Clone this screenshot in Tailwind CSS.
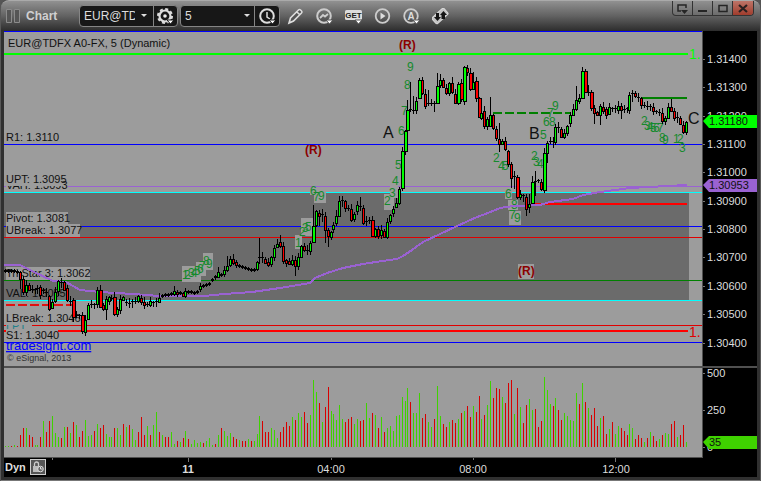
<!DOCTYPE html>
<html lang="en">
<head>
<meta charset="utf-8">
<title>Chart</title>
<script src="https://cdn.jsdelivr.net/npm/@tailwindcss/browser@4"></script>
</head>
<body class="bg-[#555] font-['Liberation_Sans',sans-serif]">
<div class="flex h-screen flex-col rounded-t-lg border-x border-[#585858] bg-[#303030]">

  <header class="flex h-[31px] shrink-0 items-center rounded-t-lg border-t border-[#aaa] bg-linear-to-b from-[#919191] via-[#626262] to-[#2d2d2d] pl-[5px]">
    <svg class="h-4 w-[15px] shrink-0" viewBox="0 0 15 16" fill="#555" stroke="#8b8b8b" aria-hidden="true"><path d="M.5 1.500h5v13h-5zM8.500 1.500h5v13h-5z"/></svg>
    <h1 class="ml-[5px] w-[53px] text-xs font-bold text-[#d0d0d0]">Chart</h1>

    <div class="flex h-[22px] shrink-0 rounded-sm border border-[#858585] bg-[#171717]">
      <input aria-label="Symbol" value="EUR@TDFX" class="ml-1 w-[51px] bg-transparent text-xs text-[#ddd] outline-none">
      <button aria-label="Symbol list" class="flex w-[18px] items-center justify-center"><svg width="6" height="4" viewBox="0 0 6 4"><path d="M0 0h6L3 3z" fill="#ddd"/></svg></button>
      <button aria-label="Settings" class="flex w-6 items-center justify-center border-l border-[#858585]">
        <svg width="17" height="17" viewBox="0 0 17 17"><circle cx="8" cy="8" r="5.500" fill="none" stroke="#ddd" stroke-width="2.200"/><circle cx="8" cy="8" r="7" fill="none" stroke="#ddd" stroke-width="2" stroke-dasharray="3 2.500"/><circle cx="8" cy="8" r="1.800" fill="#eee"/><path d="M10 12h7l-3.500 4z" fill="#fff" stroke="#171717"/></svg>
      </button>
    </div>

    <div class="ml-[2px] flex h-[22px] shrink-0 rounded-sm border border-[#858585] bg-[#171717]">
      <select aria-label="Interval" class="w-[58px] appearance-none bg-transparent pl-1 text-xs text-[#ddd] outline-none"><option>5</option></select>
      <span class="flex w-[15px] items-center justify-center"><svg width="6" height="4" viewBox="0 0 6 4"><path d="M0 0h6L3 3z" fill="#ddd"/></svg></span>
      <button aria-label="Time template" class="flex w-[25px] items-center justify-center border-l border-[#858585]">
        <svg width="17" height="17" viewBox="0 0 17 17"><circle cx="8" cy="8" r="6.800" fill="none" stroke="#ddd" stroke-width="2"/><path d="M8 4v5l3 2" fill="none" stroke="#ddd" stroke-width="1.500"/><path d="M10 12h7l-3.500 4z" fill="#fff" stroke="#171717"/></svg>
      </button>
    </div>

    <nav aria-label="Tools" class="ml-[7px] flex items-center gap-3">
      <button aria-label="Draw"><svg width="17" height="17" viewBox="0 0 17 17"><path d="M2 15l1.500-5L11.500 2q1-1 2 0l1 1q1 1 0 2L6.500 13zM10 4l3 3" fill="#555" stroke="#ddd" stroke-width="1.600"/></svg></button>
      <button aria-label="Studies"><svg width="17" height="17" viewBox="0 0 17 17"><circle cx="8" cy="8" r="6.800" fill="none" stroke="#ccc" stroke-width="2"/><path d="M4 10l3-3 2 1.500L12 6" fill="none" stroke="#ccc" stroke-width="1.800"/><path d="M10 12h7l-3.500 4z" fill="#fff" stroke="#555"/></svg></button>
      <button aria-label="GET"><svg width="17" height="17" viewBox="0 0 17 17"><rect x="0" y="2" width="17" height="10" rx="1.500" fill="#ddd"/><text x="8.500" y="10" text-anchor="middle" font-size="8" font-weight="bold" fill="#222">GET</text><path d="M10 12h7l-3.500 4z" fill="#fff" stroke="#555"/></svg></button>
      <button aria-label="Replay"><svg width="17" height="17" viewBox="0 0 17 17"><circle cx="8.500" cy="8" r="6.800" fill="none" stroke="#ccc" stroke-width="1.800"/><path d="M6.500 4.500v7l5-3.500z" fill="#ddd"/></svg></button>
      <button aria-label="Alerts"><svg width="17" height="17" viewBox="0 0 17 17"><circle cx="8" cy="8" r="6.800" fill="none" stroke="#ccc" stroke-width="1.800"/><text x="8" y="12" text-anchor="middle" font-size="10" font-weight="bold" fill="#ddd">A</text><path d="M10 12h7l-3.500 4z" fill="#fff" stroke="#555"/></svg></button>
      <button aria-label="Link"><svg width="17" height="17" viewBox="0 0 17 17"><rect x="0" y="4" width="16" height="8" rx="1.500" transform="rotate(-42 8 8)" fill="#c4c4c4" stroke="#ddd"/><path d="M5 5l2 0v4h2l-3.500 4L2 9h2V5zM9.500 11V7H8l3.500-4L15 7h-2v4z" fill="#151515"/></svg></button>
    </nav>

    <div class="mr-[6px] ml-auto flex h-[15px] self-start overflow-hidden rounded-b-sm border border-t-0 border-[#333] bg-linear-to-b from-[#909090] to-[#6c6c6c]">
      <button aria-label="Window menu" class="flex w-5 items-center justify-center border-r border-[#333]"><svg width="11" height="11" viewBox="0 0 11 11"><path d="M4 8H1V2h8v3" fill="none" stroke="#252525" stroke-width="1.500"/><path d="M4 7h7L7.500 11z" fill="#252525"/></svg></button>
      <button aria-label="Minimize" class="flex w-5 items-center justify-center border-r border-[#333]"><svg width="10" height="10" viewBox="0 0 10 10"><path d="M0 7h9v2H0z" fill="#252525"/></svg></button>
      <button aria-label="Maximize" class="flex w-5 items-center justify-center border-r border-[#333]"><svg width="10" height="10" viewBox="0 0 10 10"><path d="M1 2.500h8v6H1z" fill="none" stroke="#252525" stroke-width="1.500"/></svg></button>
      <button aria-label="Close" class="flex w-5 items-center justify-center bg-linear-to-b from-[#bd7468] to-[#a03c2c]"><svg width="10" height="10" viewBox="0 0 10 10"><path d="M1 2l8 7M9 2L1 9" stroke="#2a2020" stroke-width="2.200"/></svg></button>
    </div>
  </header>

  <main class="mx-[3px] flex min-h-0 flex-1 flex-col bg-black">
    <section class="flex min-h-0 flex-1">
      <div class="min-w-0 flex-1 border-r border-[#505050] bg-[#9c9c9c]">
        <svg class="block h-full w-full" viewBox="4 31 698 335" preserveAspectRatio="xMinYMin meet" font-size="11" role="img" aria-label="EUR@TDFX price chart">
          <g shape-rendering="crispEdges">
            <path d="M4 193h685v107H4z" fill="#6b6b6b"/>
            <path d="M4 31h698v1H4zM4 144h698v1H4zM4 226h698v1H4zM4 342h698v1H4z" fill="#00f"/>
            <path d="M4 53h684v2H4z" fill="#0f0"/>
            <path d="M4 186h698v1H4z" fill="#9a62d2"/>
            <path d="M4 192h698v1H4zM4 300h698v1H4z" fill="#0ff"/>
            <path d="M4 237h698v1H4zM4 325h698v1H4z" fill="#e00000"/>
            <path d="M4 330h684v2H4zM532 203h155v2H532z" fill="#f00"/>
            <path d="M4 280h698v1H4zM641 97h46v2h-46z" fill="#008000"/>
            <path d="M493 113h78" stroke="#008000" stroke-width="2" stroke-dasharray="9 3"/>
            <path d="M6 305h68" stroke="#e01010" stroke-width="2" stroke-dasharray="9 3"/>
          </g>
          <g id="labels"></g>
          <clipPath id="linkclip"><rect x="4" y="342" width="100" height="12"/></clipPath>
          <g clip-path="url(#linkclip)"><a href="#"><text x="6" y="350" font-size="13" fill="#00f" text-decoration="underline">tradesight.com</text></a></g>
          <text x="7" y="361" font-size="9" fill="#333">© eSignal, 2013</text>
          <g id="counts" fill="#158a2d"></g>
          <polyline points="4,265 20,265 34,272 53,281 66,282 80,290 100,292 133,294 160,296 204,296 224,294 252,292 280,288 310,283 315,278 327,273 343,268 363,264 382,261 397,259 403,256 412,250 423,242 440,234 457,226 477,217 488,213 500,208 513,206 540,205 550,202 573,199 583,195 600,192 630,188 667,186 687,185" fill="none" stroke="#9a62d2" stroke-width="2" shape-rendering="crispEdges"/>
          <g id="candles" shape-rendering="crispEdges"></g>
          <g fill="#8b0000" font-size="12" font-weight="bold"><text x="399" y="49">(R)</text><text x="305" y="154">(R)</text><rect x="518" y="264" width="16" height="15" fill="#9c9c9c"/><text x="518" y="275">(R)</text></g>
          <g font-size="16" fill="#111"><text x="383" y="138">A</text><text x="529" y="139">B</text><text x="688" y="124">C</text></g>
          <text x="689" y="59" font-size="14" fill="#0f0">1.</text>
          <text x="689" y="337" font-size="14" fill="#e00000">1.</text>
        </svg>
      </div>
      <div class="w-[54px] shrink-0">
        <svg id="prices" class="block h-full w-full" viewBox="703 31 54 335" preserveAspectRatio="xMinYMin meet" font-size="11" fill="#ddd"></svg>
      </div>
    </section>

    <section class="flex h-[92px] shrink-0 border-t-2 border-[#505050]">
      <div class="min-w-0 flex-1 border-r border-b border-[#505050] bg-[#9c9c9c]">
        <svg id="volume" class="block h-full w-full" viewBox="4 368 698 89" preserveAspectRatio="xMinYMin meet" shape-rendering="crispEdges" role="img" aria-label="Volume"></svg>
      </div>
      <div class="w-[54px] shrink-0">
        <svg class="block h-full w-full" viewBox="703 368 54 90" preserveAspectRatio="xMinYMin meet" font-size="11" fill="#ddd">
          <path d="M703 373h2v1h-2zM703 410h2v1h-2zM703 447h2v1h-2z" fill="#777"/>
          <text x="707" y="377">500</text><text x="707" y="414">250</text><text x="707" y="451">0</text>
          <path d="M703 442l6-6h48v13h-48z" fill="#3fd200"/><text x="709" y="446" fill="#111">35</text>
        </svg>
      </div>
    </section>

    <footer class="flex h-[19px] shrink-0 text-[#ddd]">
      <div class="flex w-[42px] shrink-0 gap-1 pt-px">
        <span class="pl-px text-[11px] leading-4 font-bold">Dyn</span>
        <button aria-label="Lock time scale" class="flex size-4 shrink-0 items-center justify-center border border-[#ccc] bg-[#555]"><svg width="12" height="12" viewBox="0 0 12 12"><path d="M2.500 6V3a2 2 0 0 1 4 0v3" fill="none" stroke="#ccc" stroke-width="1.300"/><path d="M1 5h7v6H1z" fill="#bbb"/><circle cx="8.500" cy="8" r="2.800" fill="#666" stroke="#ddd"/><path d="M8.500 6v2h2" fill="none" stroke="#ddd"/></svg></button>
      </div>
      <svg class="block h-full min-w-0 flex-1" viewBox="46 458 711 19" preserveAspectRatio="xMinYMin meet" font-size="11" fill="#ddd" text-anchor="middle">
        <path d="M52 458h1v2h-1zM188 458h1v4h-1zM331 458h1v2h-1zM473 458h1v2h-1zM615 458h1v4h-1z" fill="#777"/>
        <text x="188" y="473" font-weight="bold">11</text><text x="331" y="473">04:00</text><text x="473" y="473">08:00</text><text x="616" y="473">12:00</text>
      </svg>
    </footer>
  </main>
  <div class="h-1 shrink-0 border-b border-[#777]"></div>
</div>

<script>
const NS = 'http://www.w3.org/2000/svg';
function add(parent, tag, attrs, text) {
  const el = document.createElementNS(NS, tag);
  for (const k in attrs) el.setAttribute(k, attrs[k]);
  if (text) el.textContent = text;
  parent.appendChild(el);
}
const rect = (p, x, y, width, height, fill) => add(p, 'rect', { x, y, width, height, fill });
const barX = i => 5 + i * 3 - Math.floor((i + 14) / 25);

// Level labels: x, baseline, box width, text
const labels = document.getElementById('labels');
[[6,189,62,'VAH: 1.3093'],[6,183,56,'UPT: 1.3095'],[6,234,74,'UBreak: 1.3077'],[6,222,62,'Pivot: 1.3081'],
 [6,277,84,'Tri Star 3: 1.3062'],[6,297,0,'VAL: 1.3055'],[6,330,26,'LPT'],[6,322,74,'LBreak: 1.3046'],[6,339,52,'S1: 1.3040'],[6,141,0,'R1: 1.3110'],[8,47,0,'EUR@TDFX A0-FX, 5 (Dynamic)']
].forEach(([x, y, w, t]) => {
  if (w) rect(labels, x, y - 10, w, 13, '#9c9c9c');
  add(labels, 'text', { x, y, fill: t === 'LPT' ? '#20808a' : '#111' }, t);
});

// Setup counts: x, baseline, digits; boxes back the ones over the shaded zone
const counts = document.getElementById('counts');
[[182,266,19,16],[196,262,10,14],[203,253,10,17],[295,235,7,14],[301,218,12,18],[310,189,4,6],[314,190,12,13],[384,194,10,16],[390,186,8,12],[505,188,7,11],[508,200,10,10],[509,211,12,14]]
  .forEach(b => rect(counts, ...b, '#9c9c9c'));
[[182,279,'1'],[184,279,'2'],[188,277,'3'],[191,277,'4'],[194,275,'5'],[197,273,'6'],[199,270,'7'],[203,265,'8'],[206,268,'9'],
 [295,247,'1'],[299,236,'2'],[302,232,'3'],[305,231,'5'],[310,195,'6'],[313,201,'7'],[318,200,'9'],
 [384,205,'2'],[389,197,'3'],[392,185,'4'],[395,169,'5'],[398,135,'6'],[401,115,'7'],[404,89,'8'],[407,71,'9'],
 [493,162,'2'],[498,170,'4'],[502,170,'5'],[505,198,'6'],[511,209,'8'],[509,219,'7'],[514,222,'9'],
 [531,160,'2'],[533,166,'3'],[537,168,'4'],[540,139,'5'],[543,126,'6'],[549,126,'8'],[547,117,'7'],[552,110,'9'],
 [641,125,'2'],[644,130,'3'],[647,131,'4'],[650,132,'5'],[653,132,'6'],[657,132,'7'],[659,142,'8'],[662,144,'9'],[673,143,'1'],[677,143,'2'],[679,152,'3']
].forEach(([x, y, t]) => add(counts, 'text', { x, y, 'font-size': 12 }, t));

// Price bars: x top bottom colour [high low]; k marks a flat bar
const prices = `5 270 272 k,8 270 272 k,11 270 272 k,14 270 272 k,17 271 273 k,20 272 279 r 271 289,23 279 292 r,26 285 292 g,29 285 290 r,32 289 291 k,35 289 291 k,38 288 290 k,41 287 295 r 285 299,44 290 292 k,47 292 294 k,50 296 309 r 295 311,52 302 308 g,55 292 301 g,58 281 291 g 280 296,61 282 284 k,64 282 290 r,66 288 300 r,69 301 303 k,72 300 317 r 298 322,75 315 317 k,78 315 317 k,81 315 331 r,84 320 332 g,87 305 319 g,90 304 306 k,93 304 306 k,96 290 304 g,99 290 307 r,102 305 309 r,105 299 309 g 296 320,108 297 301 g,111 298 300 k,114 297 314 r,117 309 314 g,120 299 310 g,123 297 300 g,126 302 304 k,129 303 305 k,132 301 304 k,135 301 303 k,137 296 301 g,140 298 302 r,143 302 305 r,146 304 306 k,149 301 305 g,152 302 304 k,155 301 303 k,158 298 302 g,161 295 297 k,164 294 296 k,167 294 296 k,170 293 295 k,173 291 294 g,176 292 294 r,179 292 294 k,182 293 296 r,186 291 296 g,188 291 293 k,191 291 293 k,194 292 294 k,197 291 293 k,200 286 289 g,203 285 287 k,206 284 286 k,209 283 285 k,212 279 281 k,215 276 279 k,218 272 277 g,221 274 276 k,224 270 274 g,227 266 270 g 256 272,230 259 265 g 256 267,233 259 263 r,236 262 265 r,239 265 267 k,242 266 268 k,245 267 269 k,248 268 270 k,251 269 271 k,254 269 271 k,257 262 269 g,259 257 259 k 238 264,262 257 259 k,265 259 263 r,268 262 265 r,271 257 264 g,274 248 257 g,277 244 247 g,280 242 246 r 235 248,283 246 261 r,286 260 263 r,289 261 264 r,292 260 264 g,295 260 266 r 256 276,298 257 266 g,301 246 257 g,304 246 250 r,307 250 252 k,310 243 251 g,313 226 242 g 205 243,316 211 225 g,319 213 216 r 210 226,322 214 218 k,325 216 230 r 212 243,328 230 236 r 228 247,331 232 237 g,334 225 229 g,337 216 223 g 210 226,340 201 216 g 196 217,342 200 202 k 196 207,345 201 208 r,348 208 210 k,351 209 220 r,354 214 219 g,357 205 211 g,360 206 208 k 197 211,363 208 223 r,366 221 223 k,369 220 222 k 217 224,372 220 236 r,375 229 236 g,378 229 236 r,381 230 235 g,384 231 237 r,387 222 237 g,390 215 221 g,393 209 213 g,396 203 207 g,399 189 203 g,402 151 188 g,405 131 151 g,407 110 130 g 100 131,410 109 111 k 82 112,413 110 112 k 96 114,416 101 110 g,419 80 98 g 78 99,422 80 93 r,425 94 106 r,428 103 105 k 90 106,431 103 105 k,434 103 105 k 101 112,437 86 103 g 73 104,440 80 85 g 74 88,443 80 87 r,446 88 93 r,449 83 93 g,452 83 92 r 77 94,455 94 103 r,458 84 103 g,461 83 99 r,464 67 101 g,467 68 72 r 65 76,470 73 89 r,473 82 89 g 72 90,476 81 98 r,479 98 117 r,481 113 118 g,484 111 126 r,487 119 126 g,490 115 126 g 97 127,493 115 128 r,496 129 138 r,499 139 144 r 123 152,502 141 144 g,505 141 149 r,508 151 164 r,511 164 178 r 162 188,514 176 179 k 171 189,517 177 197 r,520 194 197 g,523 195 198 k,526 197 209 r 194 216,529 204 207 g 194 213,532 182 203 g 176 204,535 181 183 k 171 196,538 180 182 k,541 182 189 r,544 153 190 g,547 143 153 g 141 163,550 141 143 k,553 141 143 k 137 148,555 127 142 g,558 127 129 k,561 129 137 r,564 133 137 g,567 126 133 g,570 115 123 g,573 109 115 g,576 100 109 g 86 111,579 98 101 g,582 71 98 g 67 99,585 71 92 r 69 93,588 92 94 k 85 96,591 92 108 r,594 108 113 r 105 124,597 112 115 r,600 106 115 g 104 125,603 107 111 r,606 109 115 r,609 107 114 g,612 108 110 k,615 108 110 k,618 106 110 g,621 106 110 r 103 119,624 109 111 k,627 108 110 k,629 95 110 g,632 93 95 k 90 102,635 93 96 r,638 97 99 k,641 98 105 r,644 105 107 k,647 106 108 k,650 106 108 k,653 107 111 r,656 111 113 k,659 112 114 k,662 113 121 r,665 118 121 g,668 107 118 g,671 107 111 r 99 112,674 111 118 r,677 117 119 k,680 118 124 r,683 125 132 r,686 122 132 g`;
const candles = document.getElementById('candles');
prices.split(',').forEach((row, i) => {
  const [xs, ts, bs, c, hs, ls] = row.split(' ');
  const k = Math.max(0, Math.round((+xs - 5) / 2.96));
  const x = [k - 1, k, k + 1].map(barX).reduce((a, b) => Math.abs(b - xs) < Math.abs(a - xs) ? b : a);
  const t = +ts, b = +bs;
  const calm = c === 'k' && (x < 20 || x > 158 && x < 256);
  const h = hs ? +hs : t - (calm ? 1 : 1 + i * 7 % 5), l = ls ? +ls : b + (calm ? 1 : 1 + i * 5 % 4);
  rect(candles, x, h, 1, l - h, '#000');
  if (c === 'k') return rect(candles, x - 1, t, 3, calm ? 2 : 1, '#000');
  const w = b - t > 15 ? 4 : 3;
  rect(candles, x - 1, t, w, b - t + 1, '#000');
  rect(candles, x, t + 1, w - 2, Math.max(1, b - t - 1), c === 'g' ? '#0f0' : '#f00');
});

// Volume: height in px, then colour
const vols = '1g1g1r2g1r12r19r19g12r10r2g2g10r26g15r26r31g14g10g9r20g20r14g25r22g10r16r27g11g12g16r23g19r22r13g10g10g19r19g12g23r20g22r18g7g15r30r12r21g12r22g35g15r12g10r10r15g3g6r5g9r16g8r3g7g4g5g4r6g9g2g3r12g19r16g11g14g10r8r7g6r6r8g6r6g13g31g26r15r15r19g17g9g15r20r25r21r30g27r34g30g35r24r32g67g55g44r25g40r60r36g33g27g42g28g25r28r30r23g28g26r27r44g29g34r32g19r30g15r19g21g16g31g32g50g46g59g45r34g34g54g29r33r25g20g28r61g31g23r20r25g27r24r28g34r36g41r30r41g35r51r28g32r42g66g49r59r58r50g44r64r67r33g59r40g24r42r48g37g38r20r26r70g57g43g41r49g37r27r34g31g27g26g54g43r64g45r39g32r39r21r29g31r13r18g25r13g21g19r16r12r23g19g8r12r9r5g9r15g11r6r8g12r14g13g23r26r10g12r22r5g';
const volume = document.getElementById('volume');
vols.match(/\d+[gr]/g).forEach((v, i) => {
  const h = parseInt(v);
  rect(volume, barX(i), 447 - h, 1, h, v.endsWith('g') ? '#3fd200' : '#d80000');
});

// Price scale and last-value tags
const scale = document.getElementById('prices');
for (let i = 0; i <= 10; i++) {
  const y = Math.round(59 + i * 28.35);
  rect(scale, 703, y, 2, 1, '#777');
  add(scale, 'text', { x: 707, y: y + 4 }, (1.314 - i * 0.001).toFixed(5));
}
[[121, '#0f0', '1.31180'], [185, '#9a62d2', '1.30953']].forEach(([y, fill, t]) => {
  add(scale, 'path', { d: `M703 ${y}l6-6h48v13h-48z`, fill });
  add(scale, 'text', { x: 709, y: y + 4, fill: '#111' }, t);
});
</script>
</body>
</html>
